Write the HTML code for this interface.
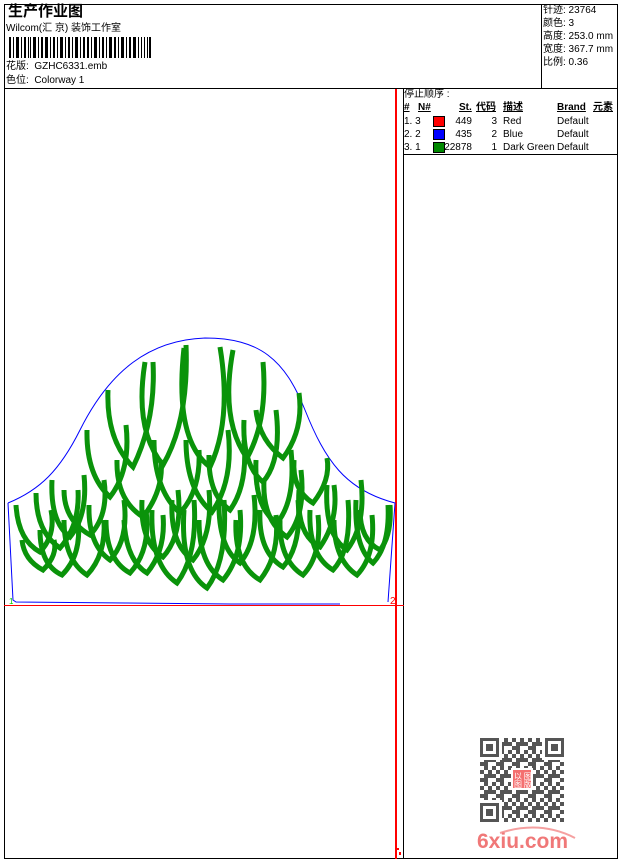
<!DOCTYPE html>
<html><head><meta charset="utf-8">
<style>
html,body{margin:0;padding:0;background:#fff;}
body{width:620px;height:860px;position:relative;overflow:hidden;font-family:"Liberation Sans","Noto Sans CJK SC",sans-serif;font-size:10px;color:#000;}
.a{position:absolute;white-space:nowrap;line-height:12px;}
.ln{position:absolute;background:#000;}
</style></head><body>
<div class="ln" style="left:4px;top:4px;width:614px;height:1px"></div>
<div class="ln" style="left:4px;top:4px;width:1px;height:855px"></div>
<div class="ln" style="left:617px;top:4px;width:1px;height:855px"></div>
<div class="ln" style="left:4px;top:858px;width:614px;height:1px"></div>
<div class="ln" style="left:4px;top:88px;width:614px;height:1px"></div>
<div class="ln" style="left:541px;top:4px;width:1px;height:85px"></div>
<div class="ln" style="left:403px;top:88px;width:1px;height:771px"></div>
<div class="ln" style="left:403px;top:154px;width:215px;height:1px"></div>
<div style="position:absolute;left:395px;top:89px;width:2px;height:770px;background:#f00"></div>
<div style="position:absolute;left:4px;top:605px;width:400px;height:1px;background:#f00"></div>

<div class="a" style="left:8px;top:3px;font-size:15px;line-height:17px;font-weight:bold">生产作业图</div>
<div class="a" style="left:6px;top:23px;font-size:10px">Wilcom(汇 京) 装饰工作室</div>
<svg style="position:absolute;left:9px;top:37px" width="142" height="21">
<g fill="#000">
<rect x="0" y="0" width="2" height="21"/><rect x="4" y="0" width="1" height="21"/><rect x="7" y="0" width="3" height="21"/><rect x="12" y="0" width="1" height="21"/><rect x="15" y="0" width="2" height="21"/><rect x="19" y="0" width="1" height="21"/><rect x="21" y="0" width="1" height="21"/><rect x="24" y="0" width="3" height="21"/><rect x="29" y="0" width="1" height="21"/><rect x="32" y="0" width="2" height="21"/><rect x="36" y="0" width="3" height="21"/><rect x="41" y="0" width="1" height="21"/><rect x="44" y="0" width="2" height="21"/><rect x="48" y="0" width="1" height="21"/><rect x="51" y="0" width="3" height="21"/><rect x="56" y="0" width="1" height="21"/><rect x="59" y="0" width="2" height="21"/><rect x="63" y="0" width="1" height="21"/><rect x="66" y="0" width="3" height="21"/><rect x="71" y="0" width="1" height="21"/><rect x="74" y="0" width="2" height="21"/><rect x="78" y="0" width="2" height="21"/><rect x="82" y="0" width="1" height="21"/><rect x="85" y="0" width="3" height="21"/><rect x="90" y="0" width="1" height="21"/><rect x="93" y="0" width="2" height="21"/><rect x="97" y="0" width="1" height="21"/><rect x="100" y="0" width="3" height="21"/><rect x="105" y="0" width="2" height="21"/><rect x="109" y="0" width="1" height="21"/><rect x="112" y="0" width="3" height="21"/><rect x="117" y="0" width="1" height="21"/><rect x="120" y="0" width="2" height="21"/><rect x="124" y="0" width="3" height="21"/><rect x="129" y="0" width="1" height="21"/><rect x="132" y="0" width="1" height="21"/><rect x="135" y="0" width="1" height="21"/><rect x="138" y="0" width="1" height="21"/><rect x="140" y="0" width="2" height="21"/>
</g></svg>
<div class="a" style="left:6px;top:61px">花版:&nbsp; GZHC6331.emb</div>
<div class="a" style="left:6px;top:75px">色位:&nbsp; Colorway 1</div>

<div class="a" style="left:543px;top:5px">针迹: 23764</div>
<div class="a" style="left:543px;top:18px">颜色: 3</div>
<div class="a" style="left:543px;top:31px">高度: 253.0 mm</div>
<div class="a" style="left:543px;top:44px">宽度: 367.7 mm</div>
<div class="a" style="left:543px;top:57px">比例: 0.36</div>

<div class="a" style="left:404px;top:89px">停止顺序 :</div>
<div class="a" style="left:404px;top:102px;font-weight:bold;text-decoration:underline">#</div>
<div class="a" style="left:418px;top:102px;font-weight:bold;text-decoration:underline">N#</div>
<div class="a" style="left:459px;top:102px;font-weight:bold;text-decoration:underline">St.</div>
<div class="a" style="left:476px;top:102px;font-weight:bold;text-decoration:underline">代码</div>
<div class="a" style="left:503px;top:102px;font-weight:bold;text-decoration:underline">描述</div>
<div class="a" style="left:557px;top:102px;font-weight:bold;text-decoration:underline">Brand</div>
<div class="a" style="left:593px;top:102px;font-weight:bold;text-decoration:underline">元素</div>

<div class="a" style="left:404px;top:116px">1. 3</div>
<div style="position:absolute;left:433px;top:116px;width:10px;height:9px;background:#f00;border:1px solid #000"></div>
<div class="a" style="left:440px;top:116px;width:32px;text-align:right">449</div>
<div class="a" style="left:480px;top:116px;width:17px;text-align:right">3</div>
<div class="a" style="left:503px;top:116px">Red</div>
<div class="a" style="left:557px;top:116px">Default</div>

<div class="a" style="left:404px;top:129px">2. 2</div>
<div style="position:absolute;left:433px;top:129px;width:10px;height:9px;background:#00f;border:1px solid #000"></div>
<div class="a" style="left:440px;top:129px;width:32px;text-align:right">435</div>
<div class="a" style="left:480px;top:129px;width:17px;text-align:right">2</div>
<div class="a" style="left:503px;top:129px">Blue</div>
<div class="a" style="left:557px;top:129px">Default</div>

<div class="a" style="left:404px;top:142px">3. 1</div>
<div style="position:absolute;left:433px;top:142px;width:10px;height:9px;background:#080;border:1px solid #000"></div>
<div class="a" style="left:440px;top:142px;width:32px;text-align:right">22878</div>
<div class="a" style="left:480px;top:142px;width:17px;text-align:right">1</div>
<div class="a" style="left:503px;top:142px">Dark Green</div>
<div class="a" style="left:557px;top:142px">Default</div>

<svg style="position:absolute;left:0;top:0" width="620" height="860">
<path d="M8,503 C40,490 60,470 80,430 C110,370 150,340 205,338 C260,338 285,360 305,410 C325,460 345,490 395,503 L388,602 M8,503 L13,600 L16,602 L125,603 L230,604 L340,604" fill="none" stroke="#00f" stroke-width="1"/>
<text x="9" y="604" font-size="8" fill="#0c0" font-family="Liberation Sans">1</text>
<text x="390" y="604" font-size="10" fill="#f00" font-family="Liberation Sans">2</text>
<g fill="none" stroke="#0a930a" stroke-width="5">
<path d="M184,348 Q174,440 210,467 Q232,420 220,347"/>
<path d="M108,390 Q106,440 133,467 Q156,420 153,362"/>
<path d="M145,362 Q134,430 163,465 Q189,420 186,345"/>
<path d="M233,350 Q220,420 247,458 Q268,420 263,362"/>
<path d="M256,410 Q259,440 283,458 Q304,430 299,393"/>
<path d="M154,440 Q154,490 180,513 Q201,490 199,450"/>
<path d="M186,440 Q186,490 212,512 Q234,480 228,430"/>
<path d="M117,460 Q116,500 143,517 Q164,490 161,460"/>
<path d="M87,430 Q86,475 110,497 Q131,470 126,425"/>
<path d="M64,490 Q64,520 90,535 Q109,515 104,480"/>
<path d="M36,493 Q36,532 60,548 Q80,525 78,490"/>
<path d="M16,505 Q18,540 40,552 Q56,535 51,510"/>
<path d="M22,540 Q24,560 43,570 Q58,555 54,540"/>
<path d="M40,530 Q40,565 62,575 Q82,555 78,520"/>
<path d="M64,520 Q64,560 87,575 Q106,555 104,520"/>
<path d="M106,520 Q106,560 130,573 Q151,550 146,510"/>
<path d="M124,520 Q126,560 147,573 Q166,550 163,515"/>
<path d="M152,510 Q150,565 177,583 Q198,555 194,500"/>
<path d="M184,510 Q180,570 207,588 Q228,560 224,500"/>
<path d="M199,520 Q199,565 223,580 Q244,555 240,510"/>
<path d="M236,520 Q234,565 260,580 Q280,555 276,515"/>
<path d="M260,510 Q258,552 283,567 Q302,545 298,500"/>
<path d="M280,520 Q279,560 303,575 Q322,555 318,515"/>
<path d="M310,510 Q308,555 333,570 Q352,550 348,500"/>
<path d="M334,520 Q334,560 357,575 Q376,555 372,515"/>
<path d="M356,500 Q354,548 373,563 Q390,545 388,505"/>
<path d="M360,510 Q360,540 380,550 Q392,535 390,505"/>
<path d="M294,460 Q292,490 313,503 Q331,480 327,458"/>
<path d="M327,485 Q324,535 347,550 Q366,525 361,480"/>
<path d="M299,490 Q296,535 320,547 Q339,520 334,485"/>
<path d="M264,480 Q262,520 287,537 Q306,515 301,470"/>
<path d="M256,460 Q254,508 277,523 Q296,500 291,450"/>
<path d="M244,420 Q242,465 263,482 Q282,460 276,410"/>
<path d="M209,455 Q208,495 230,510 Q248,485 244,440"/>
<path d="M219,500 Q218,548 240,563 Q259,540 254,495"/>
<path d="M172,500 Q170,545 193,560 Q213,535 209,490"/>
<path d="M142,500 Q140,542 163,557 Q183,535 178,490"/>
<path d="M89,505 Q88,545 110,560 Q129,540 124,500"/>
<path d="M52,480 Q50,522 70,537 Q88,515 84,475"/>
</g>
<defs>
<pattern id="qr" width="16" height="16" patternUnits="userSpaceOnUse">
<rect x="0" y="0" width="4" height="4" fill="#555"/><rect x="8" y="0" width="4" height="8" fill="#555"/><rect x="4" y="4" width="4" height="4" fill="#555"/><rect x="12" y="4" width="4" height="4" fill="#555"/><rect x="0" y="8" width="8" height="4" fill="#555"/><rect x="12" y="12" width="4" height="4" fill="#555"/><rect x="4" y="12" width="4" height="4" fill="#555"/>
</pattern>
</defs>
<g transform="translate(480,738)">
<rect x="0" y="0" width="84" height="84" fill="url(#qr)"/>
<g fill="#fff"><rect x="0" y="0" width="22" height="22"/><rect x="62" y="0" width="22" height="22"/><rect x="0" y="62" width="22" height="22"/></g>
<g fill="none" stroke="#555" stroke-width="3"><rect x="1.5" y="1.5" width="16" height="16"/><rect x="66.5" y="1.5" width="16" height="16"/><rect x="1.5" y="66.5" width="16" height="16"/></g>
<g fill="#555"><rect x="6" y="6" width="7" height="7"/><rect x="71" y="6" width="7" height="7"/><rect x="6" y="71" width="7" height="7"/></g>
<rect x="31" y="30" width="22" height="22" fill="#fff"/>
<rect x="33" y="32" width="18" height="18" fill="#f47070"/>
<text x="34" y="41" font-size="8" fill="#fff" font-family="Noto Sans CJK SC,sans-serif">以 图</text>
<text x="34" y="49" font-size="8" fill="#fff" font-family="Noto Sans CJK SC,sans-serif">图 版</text>
</g>
<path d="M500,833 Q540,820 575,838" fill="none" stroke="#f5a0a0" stroke-width="2"/>
<text x="477" y="848" font-size="21" font-weight="bold" fill="#f07878" font-family="Liberation Sans">6xiu.com</text>
<rect x="397" y="848" width="2" height="2" fill="#f00"/><rect x="399" y="852" width="2" height="3" fill="#f00"/>
</svg>
</body></html>
